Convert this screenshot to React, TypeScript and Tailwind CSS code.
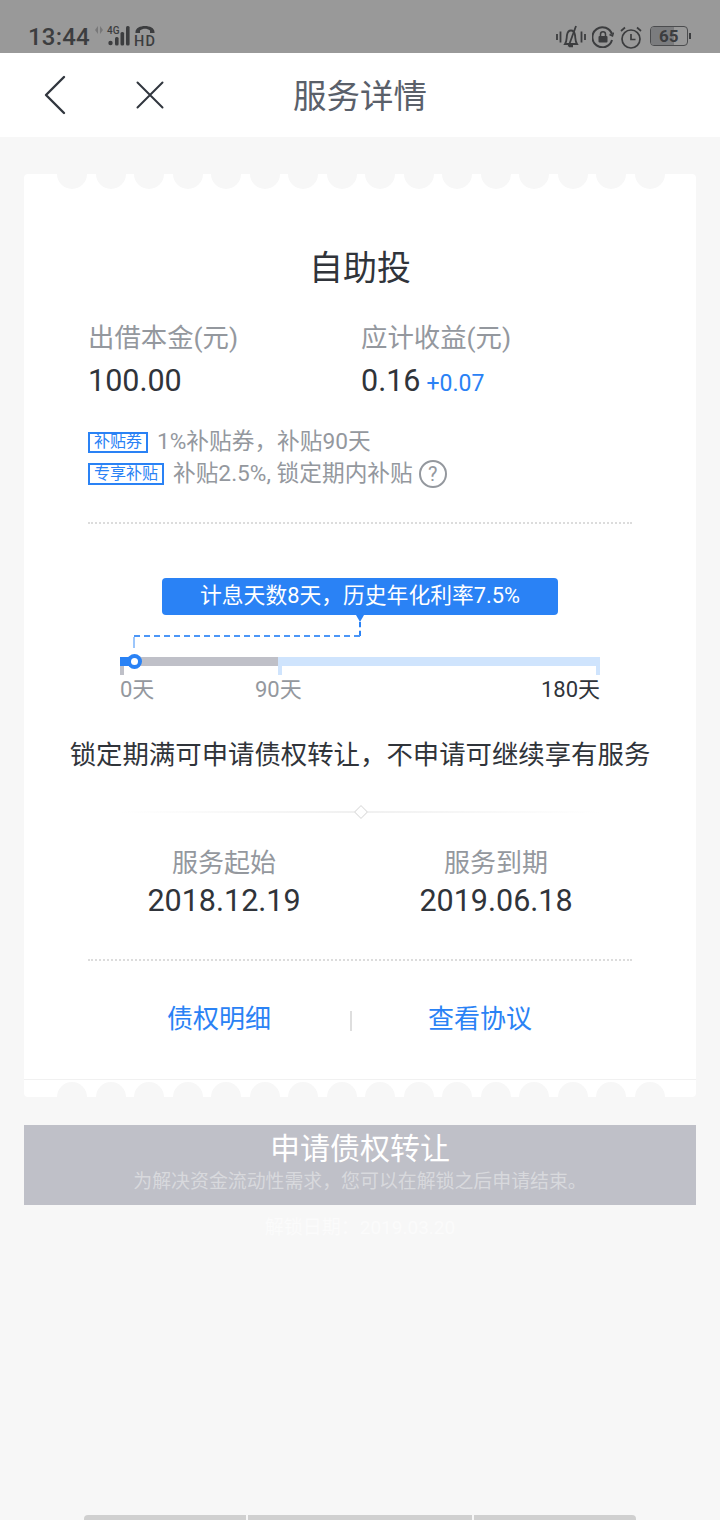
const cjk = "font-['Roboto','Noto_Sans_CJK_SC',sans-serif]";

const scallops = Array.from({ length: 16 }, (_, i) => i);

function StatusBar() {
  return (
    <div className="flex h-[53px] items-start justify-between bg-[#999999] pl-[28px] pr-[29px] pt-[24px] text-[#3c3d3f]">
      <div className="flex items-start">
        <span className="text-[24px] leading-[27px] font-medium tracking-[0.2px]">13:44</span>
        <svg width="70" height="26" viewBox="0 0 70 26" className="-mt-[1px] ml-[4px]" fill="currentColor">
          <path d="M4 3l-3 4 3 4zM6 3l3 4-3 4z" opacity=".35" />
          <text x="13" y="11" fontSize="10" fontWeight="500" fontFamily="Roboto">4G</text>
          <circle cx="16.5" cy="20" r="2.2" />
          <rect x="21" y="14" width="3.6" height="8.500" rx="1.5" />
          <rect x="26.500" y="9" width="3.600" height="13.500" rx="1.500" />
          <rect x="32" y="3" width="3.600" height="19.500" rx="1.500" />
          <path d="M41.500 9c0-8 19-8 19 0v1h-4.500V7.500c-3-2.500-7-2.500-10 0V10h-4.500z" />
          <text x="40" y="23" fontSize="14.500" fontWeight="500" fontFamily="Roboto" textLength="21">HD</text>
        </svg>
      </div>
      <div className="flex items-start">
        <svg width="30" height="24" viewBox="0 0 30 24" className="mt-[1px]" fill="none" stroke="currentColor" strokeWidth="1.800">
          <path d="M1 9v6M4.500 6.500v11M25.500 6.500v11M29 9v6" />
          <path d="M9 19c2-3 1.500-6 2-9 .5-3 2-4.500 4-4.500S18.500 7 19 10c.5 3 0 6 2 9z" />
          <path d="M12.500 21.500 20 1" />
          <path d="M13 21h4" strokeWidth="2.500" />
        </svg>
        <svg width="22" height="22" viewBox="0 0 22 22" className="ml-[6px] mt-[2px]" fill="none" stroke="currentColor" strokeWidth="2">
          <path d="M20 8.500A10 10 0 1 0 20 14" />
          <path d="M21.500 6.500l-1 3.500-3-1.500" strokeWidth="1.500" />
          <rect x="6.500" y="10" width="9" height="6.500" rx="1" fill="currentColor" stroke="none" />
          <path d="M8.500 10V8.200a2.500 2.500 0 0 1 5 0V10" strokeWidth="1.500" />
        </svg>
        <svg width="22" height="23" viewBox="0 0 22 23" className="ml-[6px] mt-[2px]" fill="none" stroke="currentColor" strokeWidth="1.700">
          <circle cx="11" cy="13" r="9" />
          <path d="M11 8v5.500h4.500" />
          <path d="M1 5l4-3.500M21 5l-4-3.500" />
        </svg>
        <div className="relative ml-[8px] mt-[2px] flex h-[20px] w-[38px] items-center overflow-hidden rounded-[4px] border border-[#4b4c4e]">
          <div className="h-full w-[23px] bg-[#7b7c7e]" />
          <span className="absolute left-[8px] text-[17px] leading-[19px] font-bold">65</span>
        </div>
        <div className="ml-[1px] mt-[9px] h-[6px] w-[2px] bg-[#3c3d3f]" />
      </div>
    </div>
  );
}

function NavBar() {
  return (
    <div className="relative flex h-[84px] items-center justify-center bg-white">
      <svg width="24" height="40" viewBox="0 0 24 40" className="absolute left-[43px] top-[22px]" fill="none" stroke="#31363e" strokeWidth="2.400" strokeLinecap="round" strokeLinejoin="round">
        <path d="M21 2 3 20l18 18" />
      </svg>
      <svg width="30" height="30" viewBox="0 0 30 30" className="absolute left-[135px] top-[27px]" fill="none" stroke="#31363e" strokeWidth="2" strokeLinecap="round">
        <path d="M2.500 2.500l25 25M27.500 2.500l-25 25" />
      </svg>
      <span className="mt-[4px] text-[33.500px] leading-none text-[#5a606a]">服务详情</span>
    </div>
  );
}

function DottedLine() {
  return <div className="h-0 border-t-2 border-dotted border-[#dcdcdc]" />;
}

function Progress() {
  return (
    <div className="relative mx-[96px] mt-[54px] h-[137px]">
      <div className="ml-[42px] flex h-[37px] w-[396px] items-center justify-center rounded-[4px] bg-[#2a82f5] text-[21.800px] text-white">
        计息天数8天，历史年化利率7.5%
      </div>
      {/* 气泡下方的虚线指示 */}
      <div className="absolute left-[236px] top-[37px] h-0 w-0 border-x-[4px] border-t-[7px] border-x-transparent border-t-[#2a82f5]" />
      <div className="absolute left-[239px] top-[44px] h-[14px] border-l-2 border-dashed border-[#2a82f5]" />
      <div className="absolute left-[14px] top-[57px] h-0 w-[226px] border-t-2 border-dashed border-[#4b96f7]" />
      <div className="absolute left-[13px] top-[59px] h-[11px] border-l-2 border-dashed border-[#9cc6fb]" />

      <div className="relative mt-[42px] flex h-[9px]">
        <div className="h-full w-[14px] bg-[#2a82f5]" />
        <div className="h-full w-[144px] bg-[#bfc0c8]" />
        <div className="h-full flex-1 bg-[#cfe4fd]" />
        <div className="absolute left-[7px] -top-[3px] flex h-[15px] w-[15px] items-center justify-center rounded-full bg-[#2a82f5]">
          <div className="h-[7px] w-[7px] rounded-full bg-white" />
        </div>
      </div>
      <div className="relative h-[9px]">
        <div className="absolute left-0 h-full w-[4px] bg-[#bfc0c8]" />
        <div className="absolute left-[158px] h-full w-[4px] bg-[#cfe4fd]" />
        <div className="absolute right-0 h-full w-[4px] bg-[#cfe4fd]" />
      </div>
      <div className="relative mt-[1px] h-[28px] text-[22px] leading-[28px] text-[#94989e]">
        <span className="absolute left-0">0天</span>
        <span className="absolute left-[135px]">90天</span>
        <span className="absolute right-0 text-[#30343a]">180天</span>
      </div>
    </div>
  );
}

export default function App() {
  return (
    <div className={`${cjk} relative flex h-[1520px] w-[720px] flex-col overflow-hidden bg-[#f7f7f7]`}>
      <StatusBar />
      <NavBar />

      <div className="relative mx-[24px] mt-[37px] h-[923px] rounded-[4px] bg-white">
        <div className="absolute left-[33px] top-0 flex gap-[8.500px]">
          {scallops.map((i) => (
            <div key={i} className="h-[15px] w-[30px] rounded-b-[15px] bg-[#f7f7f7]" />
          ))}
        </div>

        <div className="pt-[72px] text-center text-[34px] leading-[44px] text-[#30343a]">自助投</div>

        <div className="mt-[31px] grid grid-cols-2 pl-[64px] pr-[64px]">
          <div>
            <div className="text-[26.400px] leading-[34px] text-[#94989e]">出借本金(元)</div>
            <div className="mt-[8px] text-[30.500px] leading-[36px] text-[#30343a]">100.00</div>
          </div>
          <div>
            <div className="ml-[1px] text-[26.400px] leading-[34px] text-[#94989e]">应计收益(元)</div>
            <div className="ml-[1px] mt-[8px] flex items-baseline gap-[6px] text-[30.500px] leading-[36px] text-[#30343a]">
              0.16 <span className="text-[23px] text-[#2a82f5]">+0.07</span>
            </div>
          </div>
        </div>

        <div className="mt-[24px] px-[64px] text-[22.700px] leading-[32px] text-[#94989e]">
          <div className="flex items-center gap-[9px]">
            <span className="flex h-[21px] w-[60px] items-center justify-center border-2 border-[#2a82f5] text-[16px] leading-none text-[#2a82f5]">补贴券</span>
            <span>1%补贴券，补贴90天</span>
          </div>
          <div className="flex items-center gap-[9px]">
            <span className="flex h-[22px] w-[76px] items-center justify-center border-2 border-[#2a82f5] text-[16px] leading-none text-[#2a82f5]">专享补贴</span>
            <span>补贴2.5%, 锁定期内补贴</span>
            <span className="-ml-[3px] flex h-[28px] w-[28px] items-center justify-center rounded-full border-2 border-[#94989e] text-[20px] leading-none">?</span>
          </div>
        </div>

        <div className="mx-[64px] mt-[32px]">
          <DottedLine />
        </div>

        <Progress />

        <div className="mt-[20px] text-center text-[26.400px] leading-[40px] text-[#30343a]">
          锁定期满可申请债权转让，不申请可继续享有服务
        </div>

        <div className="relative mx-[96px] mt-[36px] h-[2px] bg-gradient-to-r from-transparent via-[#f0f0f0] to-transparent">
          <div className="absolute left-[236px] -top-[4px] h-[10px] w-[10px] rotate-45 border border-[#dddddd] bg-white" />
        </div>

        <div className="mt-[31px] grid grid-cols-2 px-[64px] text-center">
          <div>
            <div className="text-[26px] leading-[38px] text-[#94989e]">服务起始</div>
            <div className="text-[30.500px] leading-[38px] text-[#30343a]">2018.12.19</div>
          </div>
          <div>
            <div className="text-[26px] leading-[38px] text-[#94989e]">服务到期</div>
            <div className="text-[30.500px] leading-[38px] text-[#30343a]">2019.06.18</div>
          </div>
        </div>

        <div className="mx-[64px] mt-[39px]">
          <DottedLine />
        </div>

        <div className="mt-[38px] flex items-center text-[26px] leading-[40px] text-[#2a82f5]">
          <span className="ml-[143px]">债权明细</span>
          <span className="ml-[79px] mt-[4px] h-[20px] w-[2px] bg-[#dedede]" />
          <span className="ml-[76px]">查看协议</span>
        </div>

        <div className="absolute bottom-0 left-0 right-0 h-[18px] border-t border-[#f1f1f1]">
          <div className="absolute bottom-0 left-[33px] flex gap-[8.500px]">
            {scallops.map((i) => (
              <div key={i} className="h-[15px] w-[30px] rounded-t-[15px] bg-[#f7f7f7]" />
            ))}
          </div>
        </div>
      </div>

      <div className="mx-[24px] mt-[28px] flex h-[80px] flex-col items-center bg-[#bfc0c8] text-white">
        <div className="mt-[4px] text-[30px] leading-[40px]">申请债权转让</div>
        <div className="text-[18.900px] leading-[26px] text-[#d8d9dd]">为解决资金流动性需求，您可以在解锁之后申请结束。</div>
      </div>
      <div className="mt-[10px] text-center text-[19px] leading-[26px] text-[#fbfbfb]">解锁日期：2019.03.20</div>

      <div className="mt-auto flex justify-center gap-[2px]">
        <div className="h-[5px] w-[162px] rounded-tl-[4px] bg-[#d0d0d0]" />
        <div className="h-[5px] w-[224px] bg-[#d0d0d0]" />
        <div className="h-[5px] w-[162px] rounded-tr-[4px] bg-[#d0d0d0]" />
      </div>
    </div>
  );
}
